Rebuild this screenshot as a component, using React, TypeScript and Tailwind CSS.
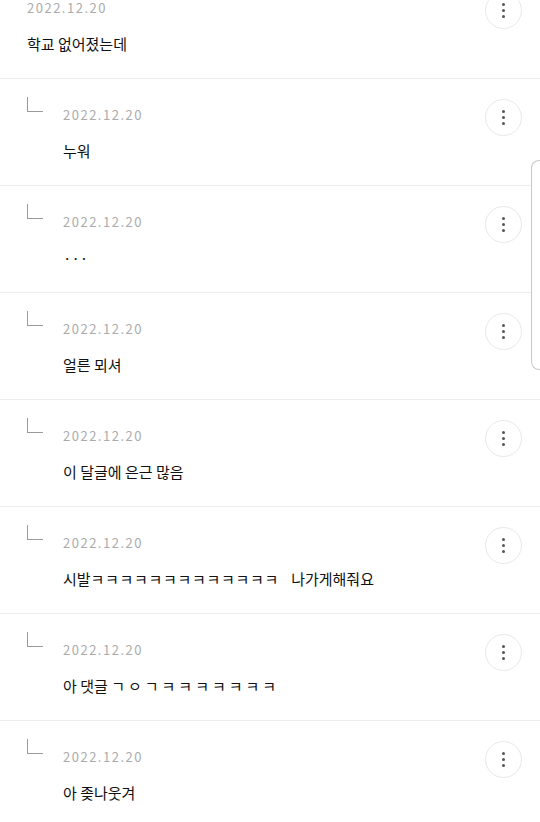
import type { ReactNode } from "react";

const comments: { reply: boolean; text: ReactNode }[] = [
  { reply: false, text: "학교 없어졌는데" },
  { reply: true, text: "누워" },
  { reply: true, text: "···" },
  { reply: true, text: "얼른 뫼셔" },
  { reply: true, text: "이 달글에 은근 많음" },
  {
    reply: true,
    text: (
      <>
        시발<span className="tracking-[0.7px]">ㅋㅋㅋㅋㅋㅋㅋㅋㅋㅋㅋㅋㅋ</span>
        <span className="inline-block w-[12px]"></span>나가게해줘요
      </>
    ),
  },
  {
    reply: true,
    text: (
      <>
        아 댓글 <span className="tracking-[3px]">ㄱㅇㄱㅋㅋㅋㅋㅋㅋㅋ</span>
      </>
    ),
  },
  { reply: true, text: "아 좆나웃겨" },
];

function MoreButton() {
  return (
    <button className="w-[37px] h-[37px] shrink-0 rounded-full border border-[#e8e8e8] bg-white flex flex-col items-center justify-center gap-[3px]">
      <span className="w-[3px] h-[3px] rounded-full bg-[#555]"></span>
      <span className="w-[3px] h-[3px] rounded-full bg-[#555]"></span>
      <span className="w-[3px] h-[3px] rounded-full bg-[#555]"></span>
    </button>
  );
}

function CommentRow({ reply, text }: { reply: boolean; text: ReactNode }) {
  return (
    <div className="flex items-start h-[107px] pl-[27px] pr-[18px] pt-[20px] border-b border-[#ededed]">
      {reply && (
        <div className="w-[36px] shrink-0">
          <div className="w-[16px] h-[15px] -mt-[2px] border-l border-b border-[#9a9a9a]"></div>
        </div>
      )}
      <div className="flex-1 min-w-0">
        <div className="mt-[8px] text-[13px] leading-[16px] tracking-[1.5px] text-[#ababab]">2022.12.20</div>
        <div className="mt-[16px] text-[15px] leading-[24px] text-[#111] whitespace-nowrap">{text}</div>
      </div>
      <MoreButton />
    </div>
  );
}

export default function App() {
  return (
    <div className="relative w-[540px] h-[822px] overflow-hidden bg-white font-['Noto_Sans_CJK_KR','Noto_Sans',sans-serif]">
      <div className="-mt-[28px]">
        {comments.map((c, i) => (
          <CommentRow key={i} reply={c.reply} text={c.text} />
        ))}
      </div>
      <div className="absolute right-0 top-[160px] w-[9px] h-[210px] border border-r-0 border-[#c8c8c8] rounded-l-[8px] bg-white"></div>
    </div>
  );
}
